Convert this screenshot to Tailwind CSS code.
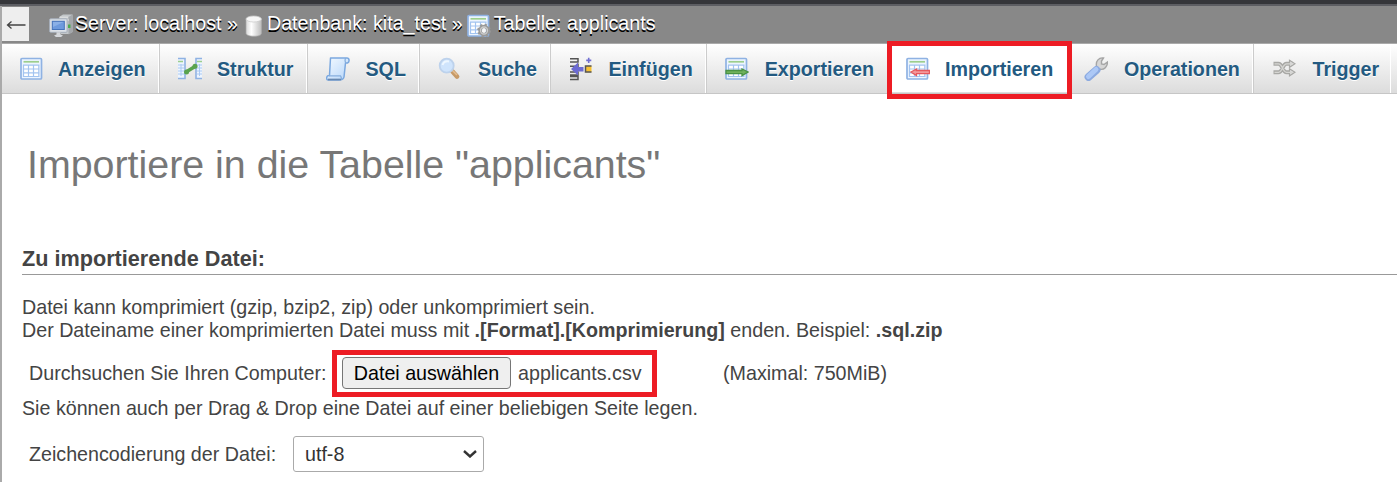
<!DOCTYPE html>
<html lang="de">
<head>
<meta charset="utf-8">
<title>Importieren</title>
<script src="https://cdn.jsdelivr.net/npm/@tailwindcss/browser@4"></script>
</head>
<body class="relative w-[1397px] h-[482px] overflow-hidden bg-white text-[19.68px] leading-[23px] text-[#444] font-['Liberation_Sans',Arial,sans-serif] whitespace-nowrap">
<svg class="absolute size-0">
  <defs>
    <linearGradient id="blue" x1="0" y1="0" x2="1" y2="1"><stop offset="0" stop-color="#f4faff"/><stop offset="1" stop-color="#b5d5fa"/></linearGradient>
    <linearGradient id="silver" x1="0" y1="0" x2="1" y2="0"><stop offset="0" stop-color="#d8d8d8"/><stop offset=".35" stop-color="#fff"/><stop offset="1" stop-color="#bcbcbc"/></linearGradient>
    <symbol id="table" viewBox="0 0 24 24">
      <rect x="1" y="1.5" width="20.5" height="20.5" rx="1" fill="#edf5ff" stroke="#8fb2e3" stroke-width="1.7"/>
      <path d="M3.5 4.8H19" stroke="#9dce8d" stroke-width="1.7"/>
      <rect x="3.5" y="8" width="15.500" height="11.500" fill="#fff"/>
      <path d="M3 8.200H19.500M3 12H19.500M3 15.800H19.500M3 19.500H19.500M3.500 8V20M8.500 8V20M13.500 8V20M18.800 8V20" stroke="#a3c4f0" stroke-width="1.200"/>
    </symbol>
  </defs>
</svg>
<div class="h-1 bg-[#35363a]"></div>
<div class="h-0.5 bg-[#5d5e63]"></div>
<div class="h-[476px] border-l-2 border-[#aaa]">
  <nav class="flex h-[37px] items-center bg-[#888] text-white [text-shadow:0_1.5px_0_#000]">
    <div class="flex h-[34px] w-[27px] shrink-0 self-start mt-px items-center justify-center bg-[#eee]">
      <svg class="w-5 h-4" viewBox="0 0 20 16" fill="none" stroke="#444" stroke-width="1.300"><path d="M1.500 9H19.500M5.500 5.500L1.500 9L5.500 12.500"/></svg>
    </div>
    <svg class="ml-5 mt-[2px] w-6 h-6 shrink-0" viewBox="0 0 24 24">
      <path d="M10 3L14 .5H23.500V18L20 20H12Z" fill="#c3c7ca"/><path d="M19.500 3L23.500 .5V18L19.500 20.500Z" fill="#a3a7ab"/><path d="M11 3.200H19M15 6H20" stroke="#e5e5e5"/>
      <rect x="19" y="10.500" width="2.500" height="3.500" fill="#4bab50"/>
      <rect x=".6" y="4.800" width="17.500" height="13.500" rx="1" fill="#dce1e8" stroke="#a4adb9"/>
      <rect x="3.300" y="7.300" width="12" height="8.200" fill="#6e9add" stroke="#4674bb"/>
      <path d="M4 8H14.500L4 13Z" fill="#8bb0e7"/><path d="M7.500 18.300H11.500V20.500L14 21.500L12 23H7L5 21.500L7.500 20.500Z" fill="#d5d8dc"/>
    </svg>
    <span class="ml-[2px] -mt-[3px]">Server: localhost »</span>
    <svg class="ml-[4px] mt-[2px] w-6 h-6 shrink-0" viewBox="0 0 24 24">
      <path d="M4 5V19C4 21 7 22.200 12 22.200S19.500 21 19.500 19V5Z" fill="url(#silver)" stroke="#aaa" stroke-width=".7"/><ellipse cx="11.700" cy="5" rx="7.700" ry="3" fill="#f7f7f7" stroke="#ccc" stroke-width=".8"/>
    </svg>
    <span class="ml-px -mt-[3px]">Datenbank: kita_test »</span>
    <svg class="ml-[4px] mt-[2px] w-6 h-6 shrink-0" viewBox="0 0 24 24"><use href="#table"/>
      <circle cx="17" cy="16.500" r="4" fill="none" stroke="#999" stroke-width="3.500"/><circle cx="17" cy="16.500" r="5.800" fill="none" stroke="#999" stroke-width="2" stroke-dasharray="2.270 2.270"/><circle cx="17" cy="16.500" r="3.500" fill="none" stroke="#ccc" stroke-width="1.300"/><circle cx="17" cy="16.500" r="2" fill="#f5f5f5"/>
    </svg>
    <span class="ml-[3px] -mt-[3px]">Tabelle: applicants</span>
  </nav>
  <div class="flex h-[51px] border-t border-b border-t-[#aaa] border-b-[#c6c6c6] bg-linear-to-b from-white to-[#dcdcdc] font-bold text-[#235a81] [text-shadow:0_1px_0_#fff] *:flex *:shrink-0 *:items-center *:border-r *:border-r-white *:border-l *:border-l-[#ccc] *:pl-[18px] [&_span]:mt-[2px]">
    <div class="w-[157px] !border-l-0">
      <svg class="w-6 h-6 shrink-0"><use href="#table"/></svg>
      <span class="ml-[14px]">Anzeigen</span>
    </div>
    <div class="w-[148px]">
      <svg class="w-6 h-6 shrink-0" viewBox="0 0 24 24"><path d="M0 1.500H7V21.500H0M24 1.500H18V21.500H24" fill="#edf5ff" stroke="#8fb2e3" stroke-width="1.600"/><path d="M0 4.500H5M19 4.500H24" stroke="#9dce8d" stroke-width="1.700"/><path d="M0 8H6M0 11H6M0 14H6M0 17H6M3 7V19M19 8H24M19 11H24M19 14H24M19 17H24M21.500 7V19" stroke="#aac9f2"/><path d="M8.500 14.800L17 9.500" stroke="#59a34e" stroke-width="3.500"/><circle cx="8.500" cy="15" r="2.500" fill="#59a34e"/><circle cx="17" cy="9.300" r="2.500" fill="#59a34e"/></svg>
      <span class="ml-[15px]">Struktur</span>
    </div>
    <div class="w-[112px]">
      <svg class="w-6 h-6 shrink-0" viewBox="0 0 24 24"><path d="M4.500 1H21C23.500 1 23.800 5 21.500 6H19.500L18 20C17.500 23 15 23 13 23H2C-.2 22.500 .3 18.500 3 18.500H3.500Z" fill="url(#blue)" stroke="#7ba8df" stroke-width="1.500" stroke-linejoin="round"/><path d="M20 1.200C18.500 2 19 5 20 6M3 18.800H14.500C15.500 20 15 22 16.500 22.500" fill="none" stroke="#86aedd" stroke-width="1.300"/><path d="M2 22.500H15" stroke="#6788b0" stroke-width="1.700"/></svg>
      <span class="ml-[15.500px]">SQL</span>
    </div>
    <div class="w-[131px]">
      <svg class="w-6 h-6 shrink-0" viewBox="0 0 24 24"><path d="M14.500 14.500L19 19.500" stroke="#c79a68" stroke-width="4.800" stroke-linecap="round"/><path d="M14.500 13.500L19 18" stroke="#e4bd90" stroke-width="1.500"/><circle cx="8.700" cy="8.700" r="7" fill="#cfe4fc" stroke="#bdd2ec" stroke-width="1.800"/><path d="M4.500 8Q6 3.500 11 4.500" fill="none" stroke="#eef7ff" stroke-width="2"/></svg>
      <span class="ml-[16px]">Suche</span>
    </div>
    <div class="w-[156px]">
      <svg class="w-6 h-6 shrink-0" viewBox="0 0 24 24"><path d="M1 1.800H9V5H1M1 9.200H9V6.500M1 15H9V18H1M1 22.500H9V19.500H1" fill="none" stroke="#555" stroke-width="1.500"/><path d="M2 12L9 5.500V10H14.500V14.500H9V18.500Z" fill="#6c6bd2"/><rect x="16.500" y="8.800" width="6" height="6.500" fill="#f7c131"/><path d="M22.500 9H16.500V15H22.500" fill="none" stroke="#555" stroke-width="1.500"/><path d="M19.700 .8V6M17.200 3.400H22.300" stroke="#706ed1" stroke-width="1.600"/></svg>
      <span class="ml-[15.500px]">Einfügen</span>
    </div>
    <div class="w-[182px]">
      <svg class="w-6 h-6 shrink-0" viewBox="0 0 24 24"><use href="#table"/><path d="M1 13.500H17V12L23 15L17 18.500V16.700H1Z" fill="#71b15d" stroke="#4a9344" stroke-width="1.300"/></svg>
      <span class="ml-[15.700px]">Exportieren</span>
    </div>
    <div class="w-[180px] !bg-white !border-r-[#ddd] border-b border-b-[#ddd]">
      <svg class="w-6 h-6 shrink-0 -ml-px mt-px" viewBox="0 0 24 24"><use href="#table"/><path d="M23.500 13.500H10.500V12L5 15L10.500 18.500V16.700H23.500Z" fill="#f3989b" stroke="#e6585d" stroke-width="1.300"/></svg>
      <span class="ml-[15px]">Importieren</span>
    </div>
    <div class="w-[185px] !border-l-0 !pl-[16px]">
      <svg class="w-6 h-6 shrink-0" viewBox="0 0 24 24"><path d="M12.500 9C11.500 4 15 .3 19.500 1L17.500 4V7L20 7.500L23.500 5C23.500 10 20 12.800 16.500 12.300L13 14Z" fill="#d6d6d6" stroke="#a5a5a5" stroke-width="1.400"/><path d="M12.500 13L4.500 20" stroke="#8caae0" stroke-width="7.800" stroke-linecap="round"/><path d="M12 12.500L4.500 19.500" stroke="#acc8f6" stroke-width="5" stroke-linecap="round"/></svg>
      <span class="ml-[16px]">Operationen</span>
    </div>
    <div class="w-[138px]">
      <svg class="w-6 h-6 shrink-0" viewBox="0 0 24 24"><g transform="translate(.5 -.7)"><path d="M1 7.500H6C10 7.500 10 16 14 16H20M1 16H6C10 16 10 7.500 14 7.500H20" fill="none" stroke="#a8a8a5" stroke-width="4"/><path d="M17 4L22.500 7.500L17 11ZM17 12.500L22.500 16L17 19.500Z" fill="#ddd" stroke="#a8a8a5" stroke-width="1.200"/><path d="M2 7.500H6C10 7.500 10 16 14 16H20M2 16H6C10 16 10 7.500 14 7.500H20" fill="none" stroke="#d5d5d2" stroke-width="1.300"/></g></svg>
      <span class="ml-[16.500px]">Trigger</span>
    </div>
    <div class="w-[10px] !pl-0 !border-r-0 !border-l-0"></div>
  </div>
  <main class="pl-5">
    <h1 class="mt-[47px] ml-[5px] text-[39.36px] leading-[46px] text-[#777]">Importiere in die Tabelle "applicants"</h1>
    <h2 class="mt-[58px] h-[30px] border-b border-[#999] text-[21.65px] leading-[28px] font-bold"><span>Zu importierende Datei:</span></h2>
    <p class="mt-[21px]">Datei kann komprimiert (gzip, bzip2, zip) oder unkomprimiert sein.<br>Der Dateiname einer komprimierten Datei muss mit <b>.[Format].[Komprimierung]</b> enden. Beispiel: <b>.sql.zip</b></p>
    <div class="mt-[8px] ml-[7px] flex h-[47px] items-center">
      <span class="w-[303px]">Durchsuchen Sie Ihren Computer:</span>
      <div class="flex h-[47px] w-[325px] items-center border-[5px] border-[#ed1c24] pl-[5px]">
        <button class="-mt-px h-8 w-[169px] rounded-[4px] border border-[#767676] bg-[#efefef] pt-px text-black">Datei auswählen</button>
        <span class="ml-[7px]">applicants.csv</span>
      </div>
      <span class="ml-[66px]">(Maximal: 750MiB)</span>
    </div>
    <p>Sie können auch per Drag &amp; Drop eine Datei auf einer beliebigen Seite legen.</p>
    <div class="mt-[16px] ml-[7px] flex h-9 items-center">
      <span class="w-[264px]">Zeichencodierung der Datei:</span>
      <div class="flex h-9 w-[191px] items-center justify-between rounded-[3px] border border-[#aaa] pl-[11px] pr-[6px] text-[#333]">utf-8
        <svg class="w-[14px] h-2" viewBox="0 0 14 8" fill="none" stroke="#333" stroke-width="2.400"><path d="M1 1L7 6.500L13 1"/></svg>
      </div>
    </div>
  </main>
</div>
<div class="absolute left-[887px] top-[41px] h-[58px] w-[185px] border-[5px] border-[#ed1c24]"></div>
</body>
</html>
